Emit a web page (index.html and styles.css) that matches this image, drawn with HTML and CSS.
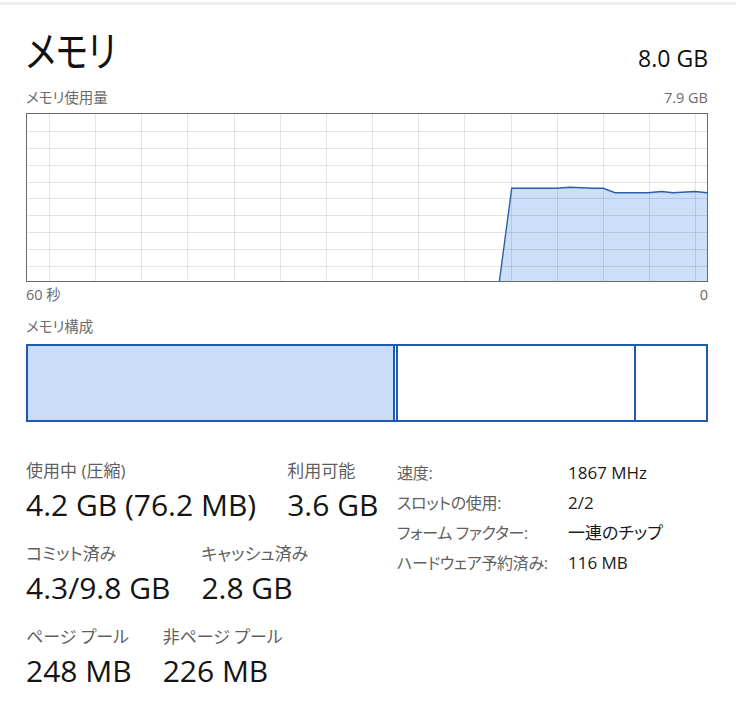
FILE: index.html
```html
<!DOCTYPE html>
<html lang="ja">
<head>
<meta charset="utf-8">
<title>メモリ</title>
<link rel="stylesheet" href="styles.css">
</head>
<body>
<div class="page">
  <div class="topbar"></div>
  <header class="head">
    <h1 class="title">メモリ</h1>
    <span class="total">8.0 GB</span>
  </header>
  <div class="chart-labels">
    <span>メモリ使用量</span>
    <span>7.9 GB</span>
  </div>
  <div class="chart">
    <svg class="chart-svg" width="682" height="169" viewBox="0 0 682 169">
      <path class="area" d="M473.3 169 L485.7 75.3 L530.7 75.3 L544 74.3 L567 75.3 L577.3 75.3 L589 79.7 L622 79.7 L635.7 78.5 L647 79.7 L669 78.5 L681 79.7 L681 169 Z"/>
      <g class="grid">
        <line x1="1" x2="681" y1="18.5" y2="18.5"/>
        <line x1="1" x2="681" y1="35.5" y2="35.5"/>
        <line x1="1" x2="681" y1="52.5" y2="52.5"/>
        <line x1="1" x2="681" y1="69.5" y2="69.5"/>
        <line x1="1" x2="681" y1="85.5" y2="85.5"/>
        <line x1="1" x2="681" y1="102.5" y2="102.5"/>
        <line x1="1" x2="681" y1="119.5" y2="119.5"/>
        <line x1="1" x2="681" y1="136.5" y2="136.5"/>
        <line x1="1" x2="681" y1="153.5" y2="153.5"/>
        <line y1="1" y2="168" x1="23.5" x2="23.5"/>
        <line y1="1" y2="168" x1="69.5" x2="69.5"/>
        <line y1="1" y2="168" x1="115.5" x2="115.5"/>
        <line y1="1" y2="168" x1="161.5" x2="161.5"/>
        <line y1="1" y2="168" x1="208.5" x2="208.5"/>
        <line y1="1" y2="168" x1="254.5" x2="254.5"/>
        <line y1="1" y2="168" x1="300.5" x2="300.5"/>
        <line y1="1" y2="168" x1="346.5" x2="346.5"/>
        <line y1="1" y2="168" x1="392.5" x2="392.5"/>
        <line y1="1" y2="168" x1="438.5" x2="438.5"/>
        <line y1="1" y2="168" x1="485.5" x2="485.5"/>
        <line y1="1" y2="168" x1="531.5" x2="531.5"/>
        <line y1="1" y2="168" x1="577.5" x2="577.5"/>
        <line y1="1" y2="168" x1="623.5" x2="623.5"/>
        <line y1="1" y2="168" x1="669.5" x2="669.5"/>
      </g>
      <path class="curve" d="M473.3 169 L485.7 75.3 L530.7 75.3 L544 74.3 L567 75.3 L577.3 75.3 L589 79.7 L622 79.7 L635.7 78.5 L647 79.7 L669 78.5 L681 79.7"/>
      <rect class="frame" x="0.5" y="0.5" width="681" height="168"/>
    </svg>
  </div>
  <div class="axis">
    <span>60 秒</span>
    <span>0</span>
  </div>
  <div class="comp-label">メモリ構成</div>
  <div class="comp">
    <div class="seg seg-used" style="width:365px"></div>
    <div class="seg seg-modified" style="width:1px"></div>
    <div class="seg seg-standby" style="width:236px"></div>
    <div class="seg seg-free"></div>
  </div>
  <section class="stats">
    <div class="stats-left">
      <div class="stat-row">
        <div class="stat">
          <div class="label">使用中 (圧縮)</div>
          <div class="value">4.2 GB (76.2 MB)</div>
        </div>
        <div class="stat">
          <div class="label">利用可能</div>
          <div class="value">3.6 GB</div>
        </div>
      </div>
      <div class="stat-row">
        <div class="stat">
          <div class="label">コミット済み</div>
          <div class="value">4.3/9.8 GB</div>
        </div>
        <div class="stat">
          <div class="label">キャッシュ済み</div>
          <div class="value">2.8 GB</div>
        </div>
      </div>
      <div class="stat-row">
        <div class="stat">
          <div class="label">ページ プール</div>
          <div class="value">248 MB</div>
        </div>
        <div class="stat">
          <div class="label">非ページ プール</div>
          <div class="value">226 MB</div>
        </div>
      </div>
    </div>
    <dl class="props">
      <dt>速度:</dt><dd>1867 MHz</dd>
      <dt>スロットの使用:</dt><dd>2/2</dd>
      <dt>フォーム ファクター:</dt><dd>一連のチップ</dd>
      <dt>ハードウェア予約済み:</dt><dd>116 MB</dd>
    </dl>
  </section>
</div>
</body>
</html>
```

FILE: styles.css
```css
html, body {
  margin: 0;
  padding: 0;
  background: #ffffff;
}

body {
  font-family: "Open Sans", "Noto Sans CJK JP", sans-serif;
  font-feature-settings: "palt";
  color: #1a1a1a;
}

.page {
  width: 736px;
  height: 718px;
  box-sizing: border-box;
  padding: 0 28px 0 26px;
  overflow: hidden;
}

.topbar {
  margin: 2px -28px 0 -26px;
  height: 3px;
  background: #efefef;
}

.head {
  display: flex;
  justify-content: space-between;
  align-items: baseline;
  margin-top: 22px;
}

.title {
  margin: 0;
  font-size: 42px;
  line-height: 48px;
  font-weight: 400;
  color: #111111;
  transform: scaleX(0.81);
  transform-origin: left center;
}

.total {
  font-size: 23px;
  line-height: 30px;
  color: #111111;
}

.chart-labels,
.axis {
  display: flex;
  justify-content: space-between;
  font-size: 14.5px;
  line-height: 18px;
  color: #6b6b6b;
}

.chart-labels {
  margin-top: 14px;
}

.chart {
  margin-top: 6px;
  height: 169px;
}

.chart-svg {
  display: block;
}

.area {
  fill: #cbdff9;
  stroke: none;
}

.grid line {
  stroke: rgba(0, 0, 0, 0.1);
  stroke-width: 1;
}

.curve {
  fill: none;
  stroke: #2d5fa8;
  stroke-width: 1.4;
}

.frame {
  fill: none;
  stroke: #6a6a6a;
  stroke-width: 1;
}

.axis {
  margin-top: 4px;
}

.comp-label {
  margin-top: 14px;
  font-size: 14.5px;
  line-height: 18px;
  color: #6b6b6b;
}

.comp {
  margin-top: 8px;
  height: 78px;
  box-sizing: border-box;
  border: 2px solid #1e5bb0;
  display: flex;
}

.seg {
  flex: 0 0 auto;
  border-right: 2px solid #1e5bb0;
}

.seg-used {
  background: #c9ddf8;
}

.seg-free {
  flex: 1 1 auto;
  border-right: none;
}

.stats {
  display: flex;
  margin-top: 36px;
}

.stats-left {
  width: 371px;
  padding-top: 2px;
  display: flex;
  flex-direction: column;
  gap: 20px;
}

.stat-row {
  display: flex;
  gap: 31px;
}

.label {
  font-size: 17px;
  line-height: 22px;
  color: #5f5f5f;
  white-space: nowrap;
}

.value {
  margin-top: 5px;
  font-size: 30px;
  line-height: 36px;
  color: #141414;
  white-space: nowrap;
}

.props {
  margin: 0;
  display: grid;
  grid-template-columns: 171px auto;
  grid-auto-rows: 30px;
  align-content: start;
  font-size: 17px;
  line-height: 30px;
  white-space: nowrap;
}

.props dt {
  color: #5f5f5f;
  font-size: 16px;
  letter-spacing: -0.3px;
}

.props dd {
  margin: 0;
  color: #1a1a1a;
}
```
